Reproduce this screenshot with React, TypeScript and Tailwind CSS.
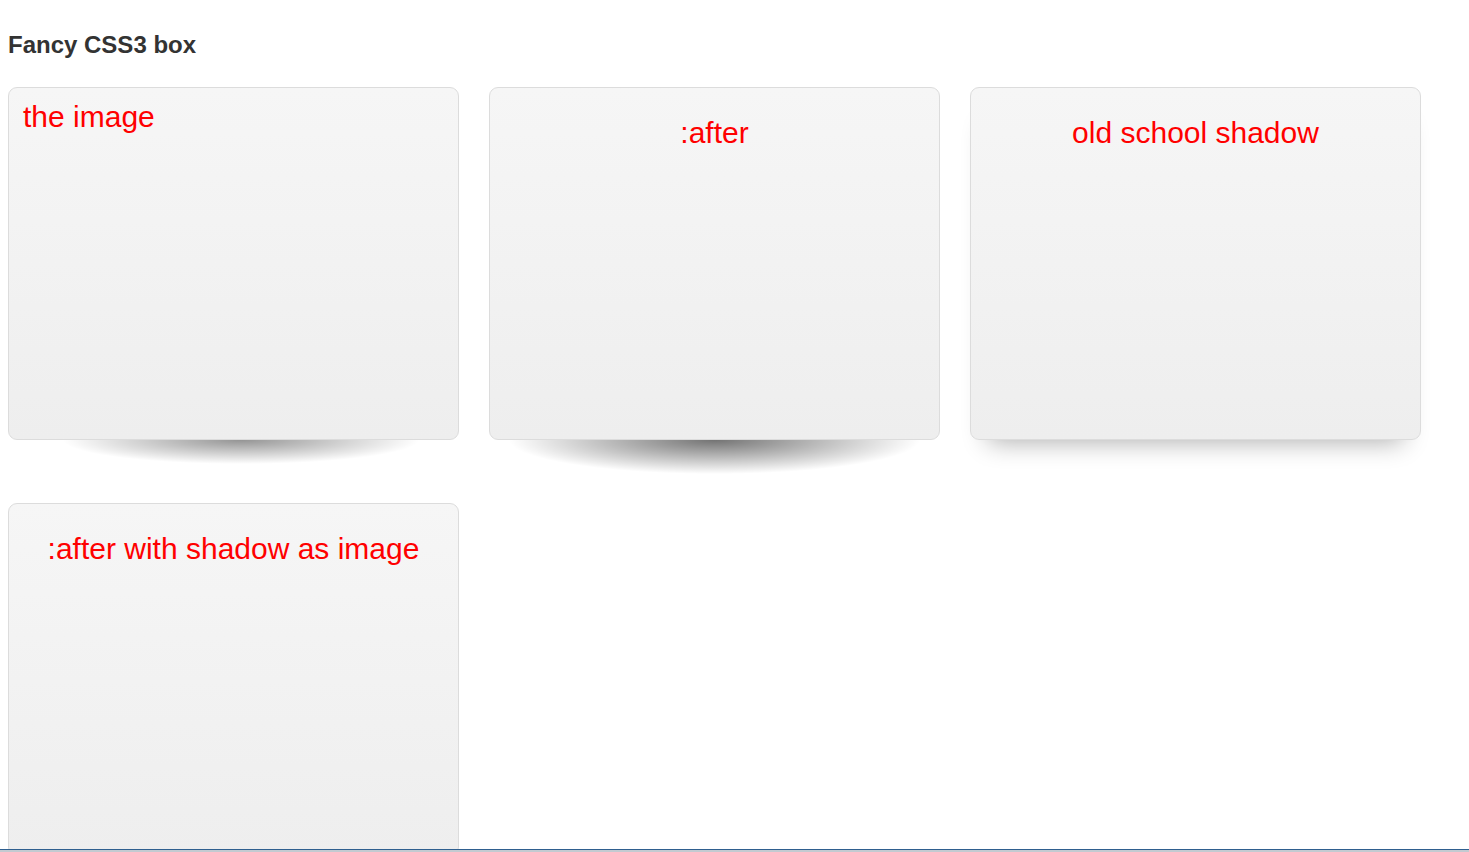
const boxes = [
  { label: "the image", kind: "image" },
  { label: ":after", kind: "after" },
  { label: "old school shadow", kind: "old" },
  { label: ":after with shadow as image", kind: "afterImage" },
];

function FancyBox({ label, kind }: { label: string; kind: string }) {
  const isImage = kind === "image";
  return (
    <div className="relative w-[451px]">
      {/* lifted shadow below the box */}
      {kind === "image" && (
        <div className="absolute top-full left-[55px] right-[40px] h-[24px] bg-[radial-gradient(ellipse_50%_100%_at_50%_0%,rgba(0,0,0,0.42),rgba(0,0,0,0)_100%)]" />
      )}
      {kind === "after" && (
        <div className="absolute top-full left-[20px] right-[20px] h-[34px] bg-[radial-gradient(ellipse_50%_100%_at_50%_0%,rgba(0,0,0,0.55),rgba(0,0,0,0)_100%)]" />
      )}
      <div
        className={
          "relative h-[353px] rounded-[9px] border border-[#dcdcdc] bg-[linear-gradient(to_bottom,#f6f6f6,#eeeeee)] text-[30px] leading-[34px] text-[#ff0000] " +
          (kind === "old" ? "shadow-[0_20px_24px_-18px_rgba(0,0,0,0.32)] " : "") +
          (isImage ? "pl-[14px] pt-[12px]" : "pt-[28px] text-center")
        }
      >
        {label}
      </div>
    </div>
  );
}

export default function App() {
  return (
    <div className="min-h-screen bg-white pl-[8px] pt-[31px] font-['Liberation_Sans',Arial,sans-serif]">
      <h2 className="text-[24px] leading-[28px] font-bold text-[#333333]">Fancy CSS3 box</h2>
      <div className="mt-[28px] grid grid-cols-[451px_451px_451px] gap-x-[30px] gap-y-[63px]">
        {boxes.map((b) => (
          <FancyBox key={b.label} label={b.label} kind={b.kind} />
        ))}
      </div>

      {/* bottom window strip */}
      <div className="fixed inset-x-0 bottom-0 h-[3px] border-t border-[#2f5f8f] bg-[#c3cad1]" />
    </div>
  );
}
